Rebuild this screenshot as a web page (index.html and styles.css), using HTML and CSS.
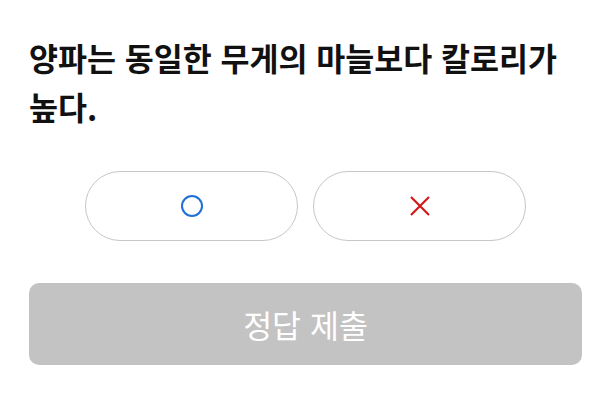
FILE: index.html
```html
<!DOCTYPE html>
<html lang="ko">
<head>
<meta charset="utf-8">
<link rel="stylesheet" href="styles.css">
</head>
<body>
<main class="quiz">
  <h1 class="question">양파는 동일한 무게의 마늘보다 칼로리가 높다.</h1>
  <div class="choices">
    <button class="choice" type="button" aria-label="O">
      <svg width="24" height="24" viewBox="0 0 24 24"><circle cx="12" cy="12" r="10" fill="none" stroke="#1f6fd8" stroke-width="2"/></svg>
    </button>
    <button class="choice" type="button" aria-label="X">
      <svg width="22" height="22" viewBox="0 0 22 22"><path d="M2 2 L20 20 M20 2 L2 20" fill="none" stroke="#d1191c" stroke-width="2.2"/></svg>
    </button>
  </div>
  <button class="submit" type="button">정답 제출</button>
</main>
</body>
</html>
```
FILE: styles.css
```css
html, body {
  margin: 0;
  padding: 0;
  background: #ffffff;
}
body {
  font-family: "Noto Sans CJK KR", "Noto Sans", sans-serif;
  color: #111111;
}
.quiz {
  padding: 33px 32px 0 29px;
  display: flex;
  flex-direction: column;
}
.question {
  margin: 0;
  font-size: 31.5px;
  font-weight: 700;
  line-height: 49px;
  color: #111111;
}
.choices {
  margin-top: 40px;
  display: flex;
  justify-content: center;
  gap: 15px;
}
.choice {
  width: 213px;
  height: 70px;
  border: 1.5px solid #c6c6c6;
  border-radius: 35px;
  background: #ffffff;
  display: flex;
  align-items: center;
  justify-content: center;
  padding: 0;
}
.submit {
  margin-top: 42px;
  height: 82px;
  border: none;
  border-radius: 10px;
  background: #c3c3c3;
  color: #ffffff;
  font-family: "Noto Sans CJK KR", "Noto Sans", sans-serif;
  font-size: 31.5px;
  font-weight: 400;
  padding: 0;
}
```
